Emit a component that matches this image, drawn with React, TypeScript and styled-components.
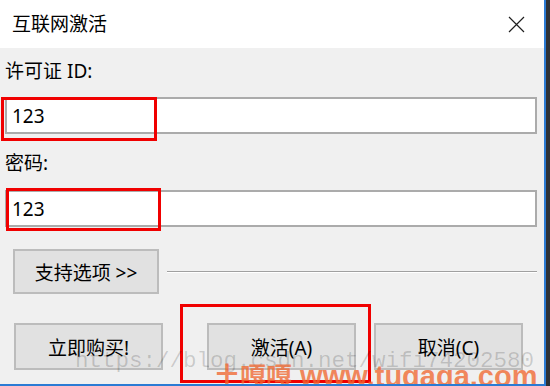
import React from "react";
import styled, { createGlobalStyle } from "styled-components";

const GlobalStyle = createGlobalStyle`
	html, body {
		margin: 0;
		padding: 0;
		background: #2e3136;
	}
	* {
		box-sizing: border-box;
	}
`;

const FONT = `"Noto Sans", "Noto Sans CJK SC", sans-serif`;

interface BoxProps {
	$x: number;
	$y: number;
	$w: number;
	$h: number;
}

const App: React.FC = () => {
	return (
		<>
			<GlobalStyle />
			<Window>
				<TitleBar>
					<TitleText>互联网激活</TitleText>
					<CloseButton aria-label="关闭">
						<svg width="17" height="17" viewBox="0 0 17 17">
							<path d="M1 1 L16 16 M16 1 L1 16" stroke="#1f1f1f" strokeWidth="1.2" fill="none" />
						</svg>
					</CloseButton>
				</TitleBar>

				<Body>
					<FieldLabel>许可证 ID:</FieldLabel>
					<TextInput defaultValue="123" $gap={14} />

					<FieldLabel $gap={17}>密码:</FieldLabel>
					<TextInput defaultValue="123" $gap={15} />

					<SupportRow>
						<Button $w={146} $h={45}>支持选项 &gt;&gt;</Button>
						<Separator />
					</SupportRow>

					<ButtonRow>
						<Button $w={149} $h={47}>立即购买!</Button>
						<ButtonGroup>
							<Button $w={149} $h={47}>激活(A)</Button>
							<Button $w={149} $h={47}>取消(C)</Button>
						</ButtonGroup>
					</ButtonRow>
				</Body>

				{/* annotation overlays */}
				<Highlight $x={1} $y={97} $w={156} $h={44} />
				<Highlight $x={6} $y={188} $w={155} $h={43} />
				<Highlight $x={180} $y={304} $w={191} $h={79} />

				<UrlMark>https://blog.csdn.net/wifi74202580</UrlMark>
				<SiteMark>
					<SiteCjk>土嘎嘎</SiteCjk> www.tugaga.com
				</SiteMark>
			</Window>
		</>
	);
};

const Window = styled.div`
	position: relative;
	width: 546px;
	height: 386px;
	overflow: hidden;
	background: #f0f0f0;
	border-right: 2px solid #2b7bd4;
	border-bottom: 2px solid #2b7bd4;
	font-family: ${FONT};
	color: #000;
`;

const TitleBar = styled.div`
	height: 48px;
	background: #ffffff;
	display: flex;
	align-items: center;
	justify-content: space-between;
	padding: 0 19px 0 12px;
`;

const TitleText = styled.div`
	font-size: 19px;
	line-height: 24px;
	color: #000;
`;

const CloseButton = styled.div`
	width: 17px;
	height: 17px;
	display: flex;
	svg {
		display: block;
	}
`;

const Body = styled.div`
	display: flex;
	flex-direction: column;
	padding: 11px 7px 0 5px;
`;

const FieldLabel = styled.div<{ $gap?: number }>`
	font-size: 19px;
	line-height: 24px;
	margin-top: ${(p) => p.$gap ?? 0}px;
`;

const TextInput = styled.input<{ $gap: number }>`
	display: block;
	width: 100%;
	height: 37px;
	margin-top: ${(p) => p.$gap}px;
	border: 2px solid #ababab;
	background: #ffffff;
	padding: 0 0 0 5px;
	font-family: ${FONT};
	font-size: 19px;
	color: #000;
	outline: none;
`;

const SupportRow = styled.div`
	display: flex;
	align-items: center;
	gap: 8px;
	margin-top: 22px;
	padding: 0 0 0 8px;
`;

const Separator = styled.div`
	flex: 1;
	height: 1px;
	background: #a0a0a0;
	box-shadow: 0 1px 0 #ffffff;
`;

const ButtonRow = styled.div`
	display: flex;
	justify-content: space-between;
	margin-top: 29px;
	padding: 0 14px 0 9px;
`;

const ButtonGroup = styled.div`
	display: flex;
	gap: 18px;
`;

const Button = styled.div<{ $w: number; $h: number }>`
	width: ${(p) => p.$w}px;
	height: ${(p) => p.$h}px;
	flex: none;
	display: flex;
	align-items: center;
	justify-content: center;
	background: #e1e1e1;
	border: 2px solid #bcbcbc;
	font-size: 19px;
	color: #000;
`;

const Highlight = styled.div<BoxProps>`
	position: absolute;
	left: ${(p) => p.$x}px;
	top: ${(p) => p.$y}px;
	width: ${(p) => p.$w}px;
	height: ${(p) => p.$h}px;
	border: 3px solid #f00000;
	pointer-events: none;
`;

const UrlMark = styled.div`
	position: absolute;
	left: 75px;
	top: 348px;
	font-family: "Liberation Mono", monospace;
	font-size: 22.5px;
	line-height: 26px;
	color: rgba(0, 0, 0, 0.16);
	white-space: nowrap;
	pointer-events: none;
`;

const SiteMark = styled.div`
	position: absolute;
	left: 214px;
	top: 360px;
	font-family: "Liberation Sans", "Noto Sans CJK SC", sans-serif;
	font-weight: 700;
	font-size: 29px;
	line-height: 29px;
	color: rgba(240, 105, 50, 0.78);
	white-space: nowrap;
	pointer-events: none;
`;

const SiteCjk = styled.span`
	font-family: "Noto Sans CJK SC", sans-serif;
	font-size: 26px;
`;

export default App;
